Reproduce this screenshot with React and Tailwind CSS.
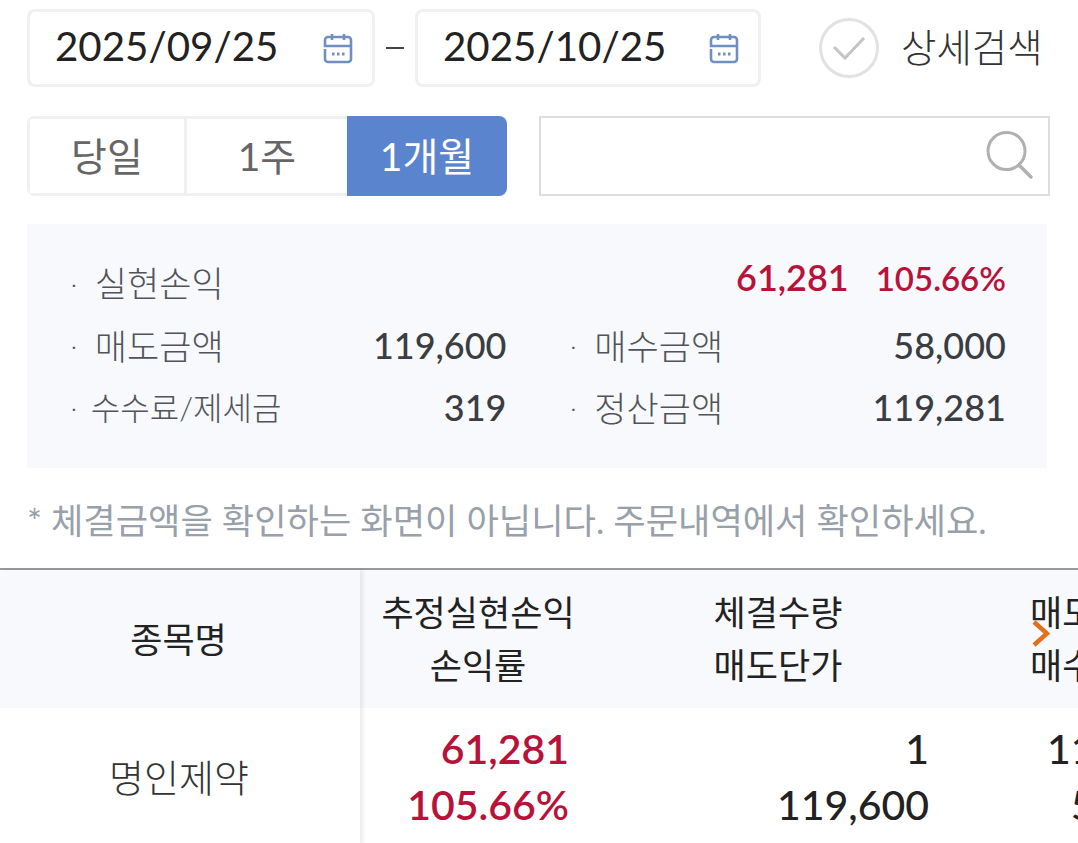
const FONT = "font-['Lato','Noto_Sans_CJK_KR',sans-serif]";

function CalendarIcon() {
  return (
    <svg width="32" height="32" viewBox="0 0 32 32" fill="none" stroke="#6f8fc4" strokeWidth="2.6">
      <path d="M3 17v10a3 3 0 003 3h20a3 3 0 003-3V8a3 3 0 00-3-3H6a3 3 0 00-3 3v6h26" />
      <path d="M10 2v6M22 2v6" />
      <path d="M10 22h2.5M15 22h2.5M20 22h2.5" strokeWidth="3" />
    </svg>
  );
}

function DateBox({ value, width }) {
  return (
    <div className={`flex h-[78px] ${width} items-center justify-between rounded-lg border-[3px] border-[#f0f0f0] pl-[25px] pr-[18px]`}>
      <span className="pb-[4px] text-[40.3px] leading-none text-[#222]">{value}</span>
      <CalendarIcon />
    </div>
  );
}

function SummaryRow({ label, value, labelClass = 'text-[35px]' }) {
  return (
    <div className="flex items-center justify-between">
      <span className="flex items-center font-light text-[#50545a]">
        <span className="mr-[18px] text-[24px] leading-none">·</span>
        <span className={labelClass}>{label}</span>
      </span>
      <span className="pb-[2px] text-[36px] leading-[50px] font-medium text-[#3a3d42]">{value}</span>
    </div>
  );
}

export default function App() {
  return (
    <div className={`h-[843px] w-[1078px] overflow-hidden bg-white ${FONT}`}>
      <div className="px-[27px] pt-[9px]">
        {/* Dates */}
        <div className="flex items-center">
          <DateBox value="2025/09/25" width="w-[348px]" />
          <span className="mx-[11px] h-[2px] w-[18px] bg-[#444]" />
          <DateBox value="2025/10/25" width="w-[346px]" />
          <div className="ml-[58px] flex h-[60px] w-[60px] items-center justify-center rounded-full border-[3px] border-[#e2e2e2]">
            <svg width="34" height="24" viewBox="0 0 34 24" fill="none" stroke="#c4c4c4" strokeWidth="3">
              <path d="M2 11l11 11L32 2" />
            </svg>
          </div>
          <span className="ml-[22px] pb-[2px] text-[38.5px] font-light leading-none text-[#333]">상세검색</span>
        </div>

        {/* Period tabs and search */}
        <div className="mt-[29px] flex h-[80px]">
          <div className="flex w-[480px] overflow-hidden rounded-lg text-[39px]">
            <div className="flex w-[160px] items-center justify-center border-[3px] border-[#f0f0f0] text-[#666]">당일</div>
            <div className="flex w-[160px] items-center justify-center border-y-[3px] border-[#f0f0f0] text-[#666]">1주</div>
            <div className="flex w-[160px] items-center justify-center bg-[#5b84cf] text-white">1개월</div>
          </div>
          <div className="ml-[32px] flex w-[511px] items-center justify-end border-2 border-[#dedede] pr-[14px]">
            <svg width="48" height="50" viewBox="0 0 48 50" fill="none" stroke="#b0b0b0" strokeWidth="3">
              <circle cx="20.5" cy="20" r="18.5" />
              <path d="M33 34l12 12" strokeLinecap="round" strokeWidth="3.5" />
            </svg>
          </div>
        </div>

        {/* Summary */}
        <div className="mt-[28px] flex h-[244px] w-[1020px] flex-col justify-center gap-[10px] bg-[#f8f9fd] pl-[44px] pr-[41px]">
          <div className="flex h-[52px] items-center justify-between">
            <span className="flex items-center text-[35px] font-light text-[#50545a]">
              <span className="mr-[18px] text-[24px] leading-none">·</span>실현손익
            </span>
            <span className="flex items-baseline gap-[27px] pb-[14px] leading-none font-semibold text-[#b8123a]">
              <span className="text-[36px]">61,281</span>
              <span className="text-[33px]">105.66%</span>
            </span>
          </div>
          <div className="grid grid-cols-2 gap-x-[64px]">
            <SummaryRow label="매도금액" value="119,600" />
            <SummaryRow label="매수금액" value="58,000" />
          </div>
          <div className="grid grid-cols-2 gap-x-[64px]">
            <SummaryRow label="수수료/제세금" value="319" labelClass="-ml-[4px] text-[32px]" />
            <SummaryRow label="정산금액" value="119,281" />
          </div>
        </div>

        <p className="mt-[30px] whitespace-nowrap text-[35.2px] leading-[44px] text-[#98a0aa]">
          * 체결금액을 확인하는 화면이 아닙니다. 주문내역에서 확인하세요.
        </p>
      </div>

      {/* Table */}
      <div className="mt-[26px] flex border-t-2 border-[#999] text-[35px]">
        {/* Fixed first column */}
        <div className="relative z-10 w-[360px] shrink-0 shadow-[3px_0_4px_rgba(0,0,0,0.08)]">
          <div className="flex h-[138px] items-center justify-center bg-[#f8f9fd] pr-[3px] text-[#222]">종목명</div>
          <div className="flex h-[135px] items-center justify-center bg-white pr-[2px] pt-[4px] text-[38px] font-light text-[#333]">명인제약</div>
        </div>

        {/* Scrolling columns */}
        <div className="min-w-0 flex-1 overflow-hidden">
          <div className="flex h-[138px] whitespace-nowrap bg-[#f8f9fd] text-[#222]">
            <div className="flex w-[236px] shrink-0 flex-col items-center justify-center gap-[13px] pb-[2px] leading-[40px]">
              <span>추정실현손익</span>
              <span>손익률</span>
            </div>
            <div className="flex w-[364px] shrink-0 flex-col items-center justify-center gap-[13px] pb-[2px] leading-[40px]">
              <span>체결수량</span>
              <span>매도단가</span>
            </div>
            <div className="relative flex w-[239px] shrink-0 flex-col justify-center gap-[13px] pb-[2px] pl-[70px] leading-[40px]">
              <span>매도금액</span>
              <span>매수금액</span>
              <svg className="absolute left-[72px] top-[50px]" width="18" height="27" viewBox="0 0 18 27" fill="none" stroke="#e2701c" strokeWidth="4.5">
                <path d="M2 2l13 11.5L2 25" />
              </svg>
            </div>
          </div>
          <div className="flex h-[135px] whitespace-nowrap pt-[19px] text-[41px] leading-[44px] font-medium">
            <div className="flex w-[236px] shrink-0 flex-col items-end gap-[12px] pr-[27px] font-semibold text-[#b8123a]">
              <span>61,281</span>
              <span>105.66%</span>
            </div>
            <div className="flex w-[364px] shrink-0 flex-col items-end gap-[12px] pr-[31px] text-[#222]">
              <span>1</span>
              <span>119,600</span>
            </div>
            <div className="flex w-[239px] shrink-0 flex-col items-end gap-[12px] text-[#222]">
              <span>119,600</span>
              <span>58,000</span>
            </div>
          </div>
        </div>
      </div>
    </div>
  );
}
